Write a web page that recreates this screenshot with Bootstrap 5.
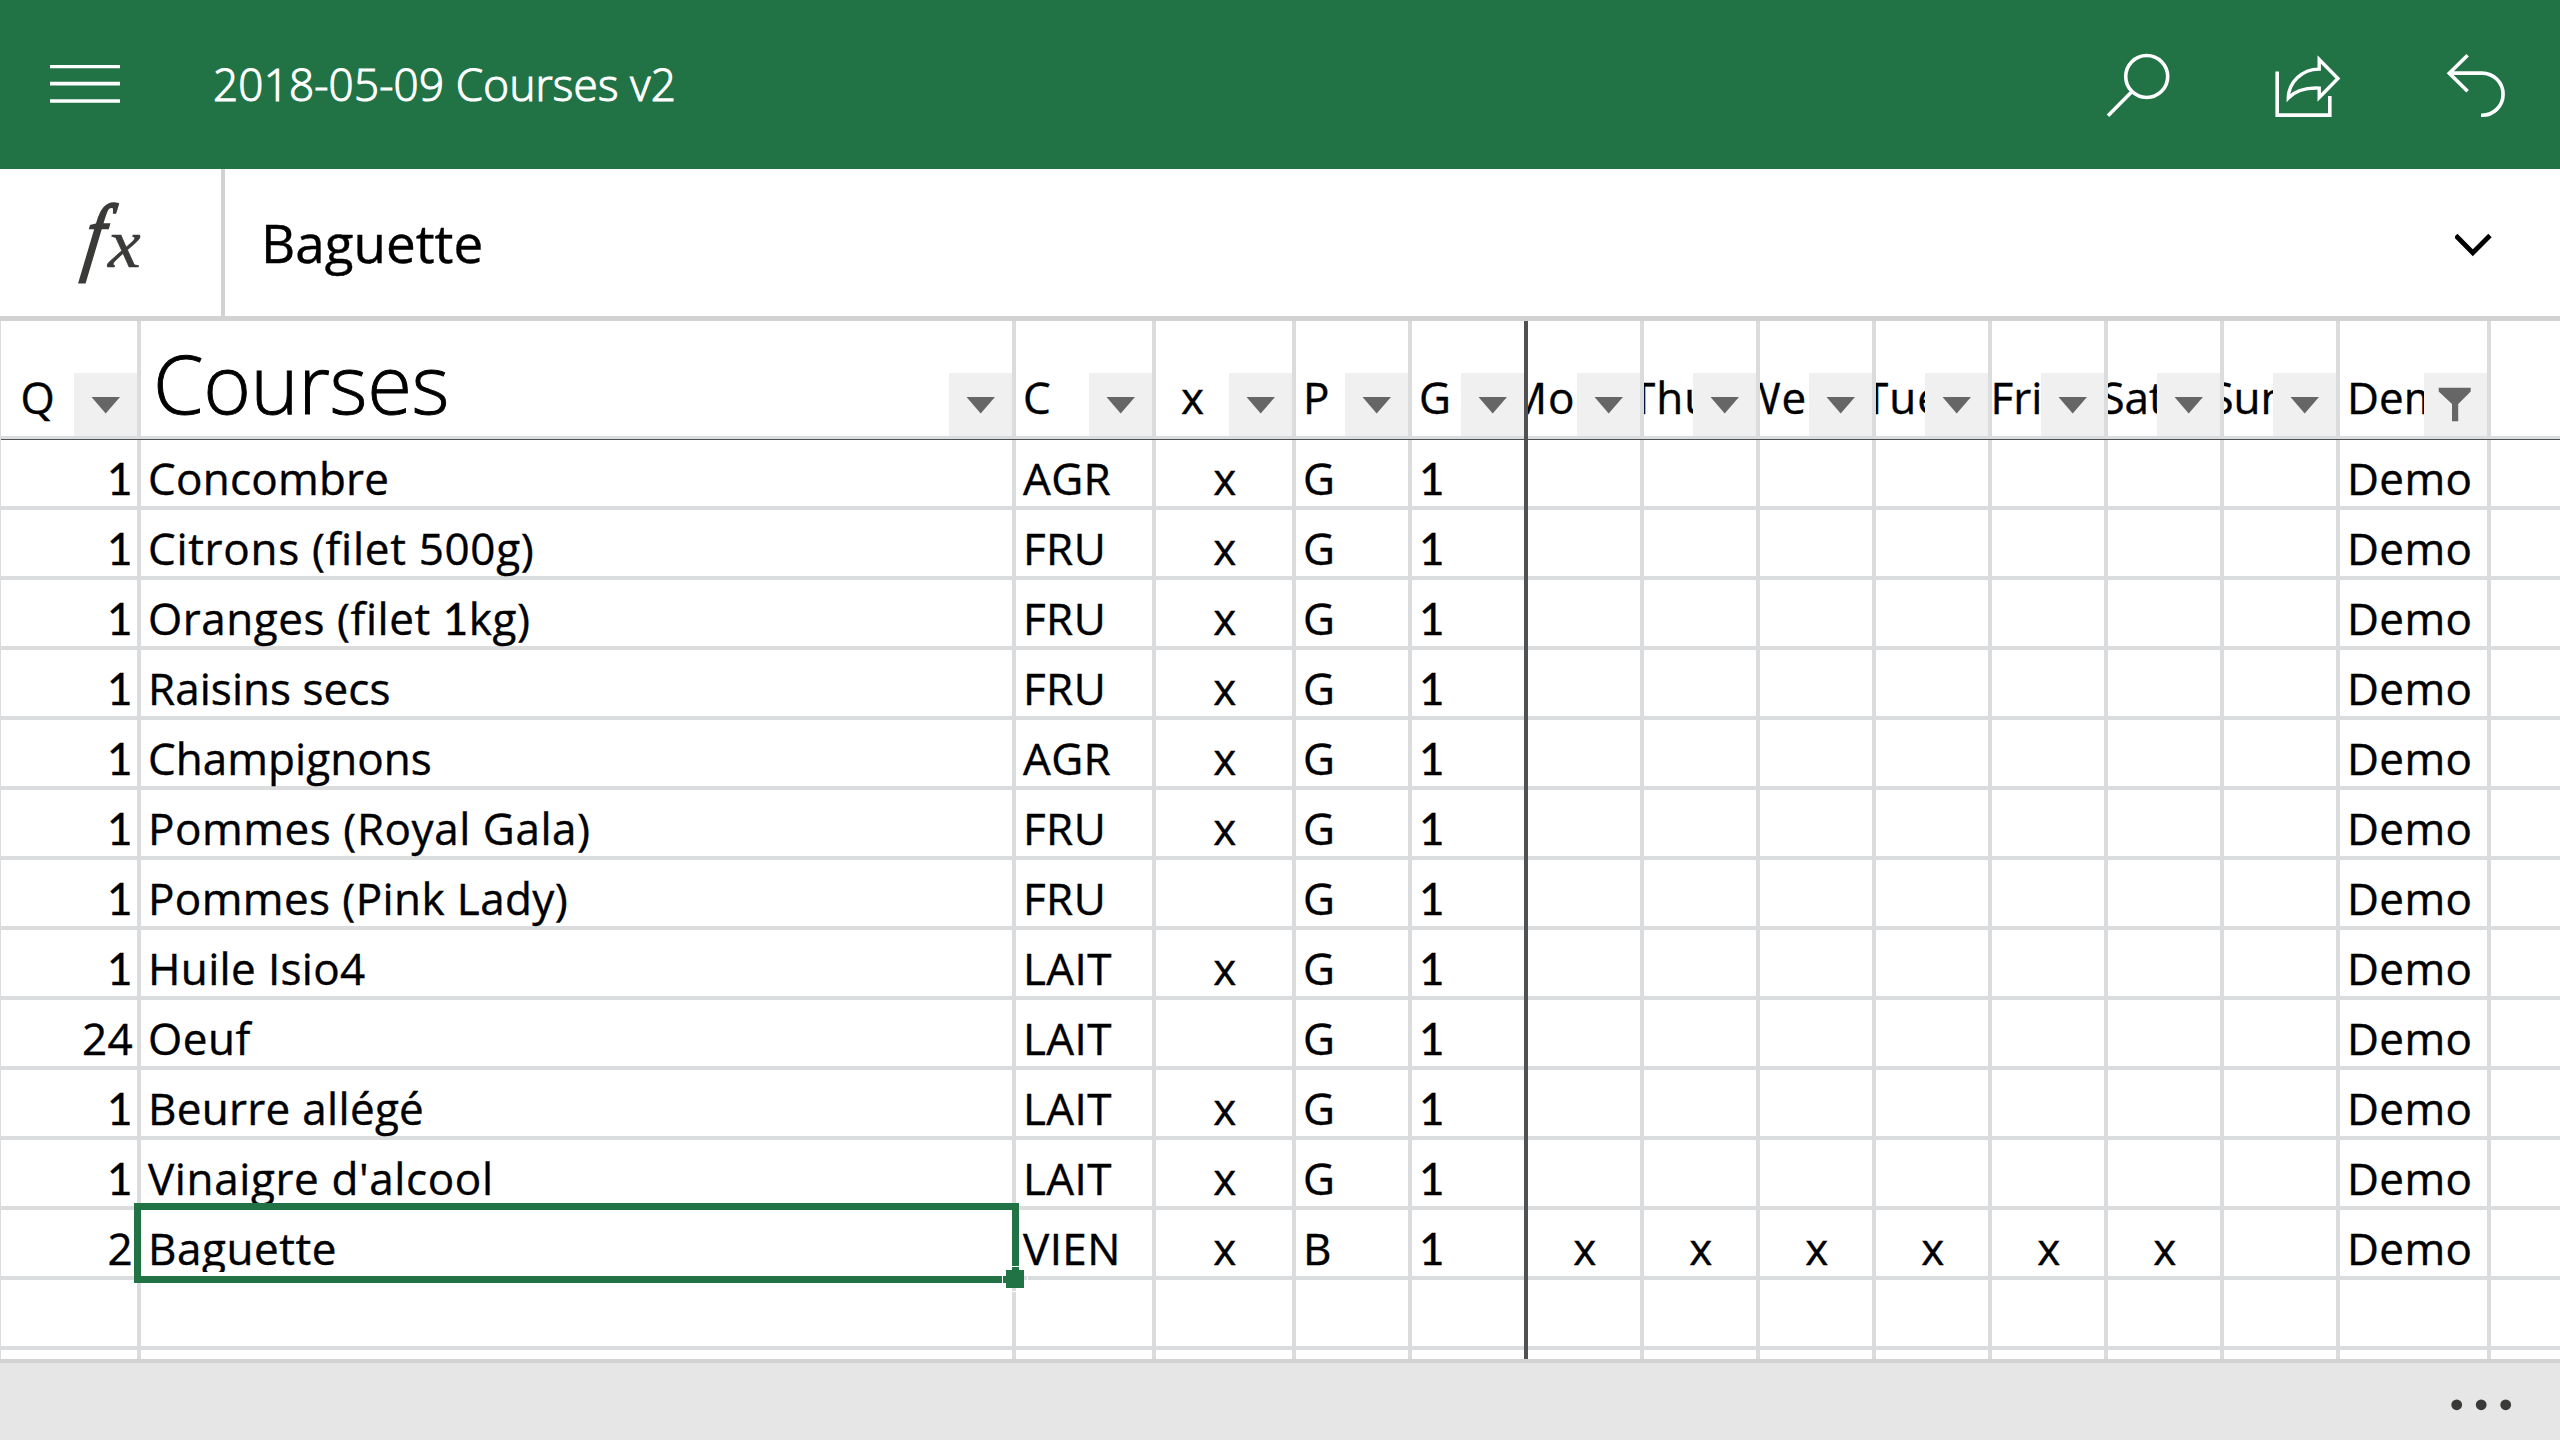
<!DOCTYPE html>
<html lang="fr">
<head>
<meta charset="utf-8">
<meta name="viewport" content="width=device-width, initial-scale=1">
<title>2018-05-09 Courses v2</title>
<link href="https://cdn.jsdelivr.net/npm/bootstrap@5.3.0/dist/css/bootstrap.min.css" rel="stylesheet">
<style>
  :root { --excel: #217346; --gridline: #dbdcde; --rule: #d2d2d2; --freeze: #505152; }
  body { font-family: "Open Sans", "Noto Sans", sans-serif; color: #000; background: #fff; }
  .app { width: 2560px; height: 1440px; }
  .app-bar { height: 169px; background: var(--excel); color: #fff; padding: 0 48px 0 50px; }
  .app-bar .doc-title { font-size: 44px; font-weight: 300; line-height: 1; margin: -2px 0 0 93px; letter-spacing: .2px; -webkit-text-stroke: 1.1px #fff; }
  .app-icon { fill: none; stroke: #fff; stroke-width: 3.6; display: block; }
  .formula-bar { height: 152px; border-bottom: 5px solid var(--rule); }
  .fx-cell { width: 225px; border-right: 4px solid var(--rule); }
  .fx-cell text { font-family: "Liberation Serif", serif; font-style: italic; fill: #3a3a38; stroke: #3a3a38; }
  .formula-text { font-size: 53px; line-height: 72px; padding-left: 36px; -webkit-text-stroke: .4px #000; }
  .sheet { height: 1038px; border-left: 1px solid var(--gridline); }
  .sheet-row { display: grid; height: 70px; grid-template-columns: 140px 875px 140px 140px repeat(9, 116px) 151px 1fr; }
  .cell { border-right: 4px solid var(--gridline); border-bottom: 4px solid var(--gridline); font-size: 44px; min-width: 0; -webkit-text-stroke: .4px #000; }
  .cell:last-child { border-right: 0; }
  .cell-text { height: 62px; line-height: 76px; padding: 0 5px 0 7px; white-space: pre; letter-spacing: .4px; }
  .cell-qty .cell-text { padding-right: 4px; }
  .cell-active .cell-text { overflow: hidden; }
  .foot-one { font-family: Lato, "Open Sans", sans-serif; }
  .sheet-head { height: 119px; border-bottom: 1px solid var(--freeze); }
  .sheet-head .cell { border-bottom-width: 3px; }
  .head-label { height: 115px; padding-top: 55px; line-height: 43px; overflow: hidden; white-space: pre; min-width: 0; }
  .head-label.from-start { padding-left: 7px; }
  .head-label.day { letter-spacing: 1px; padding-left: 6px; }
  .head-label span { flex: none; line-height: 43px; }
  .head-label.big { font-size: 81.5px; font-weight: 300; letter-spacing: -.4px; padding-left: 12px; padding-top: 39.5px; -webkit-text-stroke: .9px #000; }
  .filter-btn { width: 63px; height: 63px; background: #f0f0f0; flex: none; }
  .filter-btn svg { display: block; fill: #666; }
  .freeze-line { left: 1523px; top: 0; width: 4px; height: 1038px; background: var(--freeze); }
  .selection { inset: -7px -7px -7px -7px; border: 7px solid var(--excel); z-index: 2; pointer-events: none; }
  .selection::after { content: ""; position: absolute; right: -12px; bottom: -12px; width: 18px; height: 18px; background: var(--excel); outline: 1px solid #fff; outline-offset: 3px; }
  .bottom-bar { height: 81px; background: #e6e6e6; border-top: 4px solid var(--rule); padding-right: 48px; }
</style>
</head>
<body>
<div class="app d-flex flex-column overflow-hidden">
  <header class="app-bar d-flex align-items-center flex-shrink-0">
    <svg class="app-icon" width="70" height="40" viewBox="0 0 70 40"><path d="M0 1.400H70M0 18.600H70M0 36H70"/></svg>
    <span class="doc-title">2018-05-09 Courses v2</span>
    <div class="ms-auto d-flex">
      <svg class="app-icon" width="170" height="70" viewBox="2106 49.5 170 70"><circle cx="2146.7" cy="76" r="21"/><path d="M2132 91L2108 115.3"/></svg>
      <svg class="app-icon" width="170" height="70" viewBox="2276 49.5 170 70" overflow="visible"><path d="M2277.2 71V114.6H2329.8V95.5"/><path d="M2319.2 59L2337.9 78L2319.2 97V87.6C2306 87 2295 90.5 2288.3 97.5C2288.6 82 2301.5 68.7 2319.2 68.6Z" stroke-width="3.4"/></svg>
      <svg class="app-icon" width="66" height="70" viewBox="2446 49.5 66 70"><path d="M2467.6 54.8L2449.3 72.7L2467.6 90.8M2449.3 72.6H2482A21.1 21.1 0 0 1 2482 114.8H2481"/></svg>
    </div>
  </header>

  <section class="formula-bar d-flex align-items-stretch flex-shrink-0">
    <div class="fx-cell">
      <svg width="221" height="147" viewBox="0 169 221 147"><text transform="translate(81.500 264) skewX(-9) scale(.8 1)" font-size="86" stroke-width="2.4">f</text><text transform="translate(108 266.500) scale(1.05 1)" font-size="70" stroke-width=".6">x</text></svg>
    </div>
    <div class="formula-text d-flex align-items-center flex-grow-1"><span>Baguette</span></div>
    <svg class="align-self-center" width="105" height="40" viewBox="2455 222.5 105 40" fill="none" stroke="#000" stroke-width="4.8"><path d="M2455.700 235L2472.800 252.300L2490 235"/></svg>
  </section>

  <main class="sheet position-relative overflow-hidden flex-shrink-0" id="sheet">
    <div class="freeze-line position-absolute"></div>
  </main>

  <footer class="bottom-bar d-flex align-items-center justify-content-end flex-shrink-0">
    <svg width="62" height="20" viewBox="2450 1391.5 62 20" fill="#3a3a38"><circle cx="2456.700" cy="1404.300" r="5.400"/><circle cx="2481.200" cy="1404.300" r="5.400"/><circle cx="2505.700" cy="1404.300" r="5.400"/></svg>
  </footer>
</div>

<script src="https://cdn.jsdelivr.net/npm/bootstrap@5.3.0/dist/js/bootstrap.bundle.min.js"></script>
<script>
  const heads = ["Q", "Courses", "C", "x", "P", "G", "Mon", "Thu", "Wed", "Tue", "Fri", "Sat", "Sun", "Demo"];
  const centred = new Set([0, 3, 6, 7, 8, 9, 10, 11, 12]);
  const rows = [
    ["1", "Concombre", "AGR", "x", "G"],
    ["1", "Citrons (filet 500g)", "FRU", "x", "G"],
    ["1", "Oranges (filet 1kg)", "FRU", "x", "G"],
    ["1", "Raisins secs", "FRU", "x", "G"],
    ["1", "Champignons", "AGR", "x", "G"],
    ["1", "Pommes (Royal Gala)", "FRU", "x", "G"],
    ["1", "Pommes (Pink Lady)", "FRU", "", "G"],
    ["1", "Huile Isio4", "LAIT", "x", "G"],
    ["24", "Oeuf", "LAIT", "", "G"],
    ["1", "Beurre allégé", "LAIT", "x", "G"],
    ["1", "Vinaigre d'alcool", "LAIT", "x", "G"],
    ["2", "Baguette", "VIEN", "x", "B", "x", "x", "x", "x", "x", "x"]
  ];
  // letter spacing of each product name, in px
  const tracking = [.24, .7, .55, .05, .05, .55, .4, .35, .5, .3, .62, .55];
  const arrow = '<svg width="63" height="63"><path d="M17.500 24H46L31.700 40.500Z"/></svg>';
  const funnel = '<svg width="63" height="63"><path d="M14.700 14.700H46.700V18.500L34.200 31V48.300H28V31L14.700 18.500Z"/></svg>';
  const one = t => t.replace(/1/g, '<span class="foot-one">1</span>');

  let html = '<div class="sheet-row sheet-head">' + heads.map((h, i) =>
    `<div class="cell d-flex align-items-end">
      <div class="head-label d-flex flex-grow-1 ${centred.has(i) ? "justify-content-center" : "from-start"} ${i === 1 ? "big" : ""} ${i > 5 && i < 10 ? "day" : ""}"><span>${h}</span></div>
      <div class="filter-btn">${i === 13 ? funnel : arrow}</div>
    </div>`).join("") + '<div class="cell"></div></div>';

  const blank = Array(15).fill("");
  const lines = rows.map(r => {
    const [q, name, cat, x, p, ...days] = r;
    return [q, name, cat, x, p, "1", ...Array.from({length: 7}, (_, i) => days[i] || ""), "Demo", ""];
  }).concat([blank, blank]);

  html += lines.map((cells, r) => '<div class="sheet-row">' + cells.map((t, i) => {
    const align = i === 0 ? "text-end" : (i === 3 || (i > 5 && i < 13)) ? "text-center" : "text-start";
    const selected = r === 11 && i === 1;
    const spacing = i === 1 && r < 12 ? ` style="letter-spacing:${tracking[r]}px"` : "";
    const text = t ? `<div class="cell-text ${align}"${spacing}>${one(t)}</div>` : "";
    return `<div class="cell ${i === 0 ? "cell-qty" : ""} ${selected ? "position-relative cell-active" : ""}">${text}${selected ? '<div class="selection position-absolute"></div>' : ""}</div>`;
  }).join("") + "</div>").join("");
  document.getElementById("sheet").insertAdjacentHTML("afterbegin", html);
</script>
</body>
</html>
